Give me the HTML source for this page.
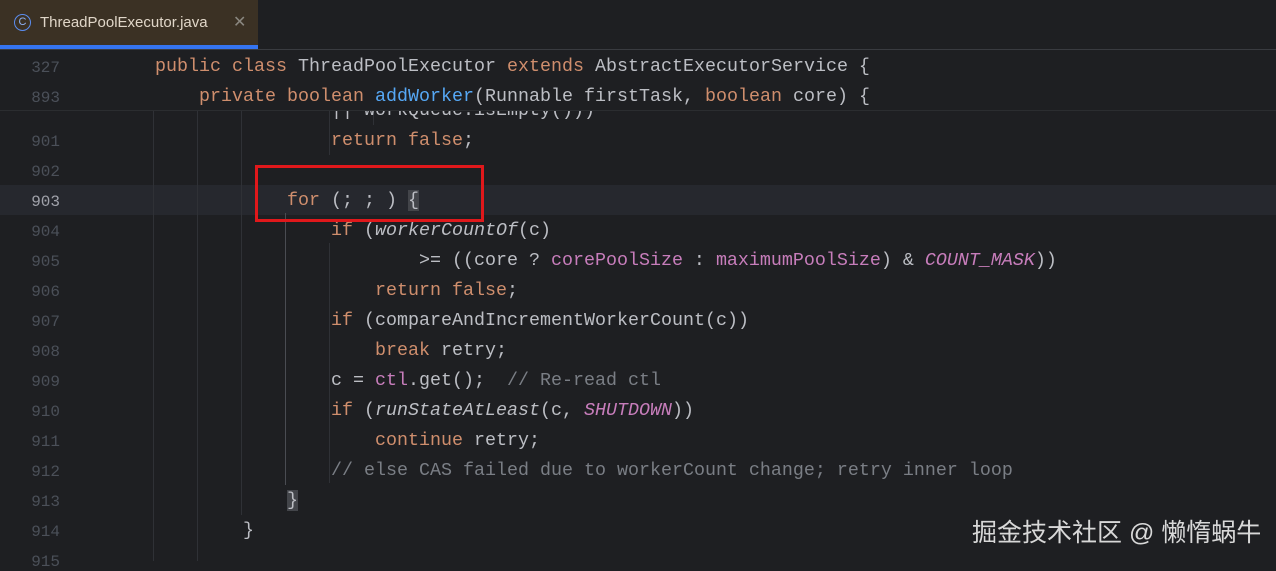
<!DOCTYPE html>
<html><head><meta charset="utf-8"><style>
body{margin:0;width:1276px;height:561px;background:#1e1f22;overflow:hidden;position:relative;font-family:"Liberation Mono",monospace;}
.tabbar{position:absolute;left:0;top:0;width:1276px;height:49px;background:#1e1f22;border-bottom:1px solid #393b40;}
.tab{position:absolute;left:0;top:0;width:258px;height:45px;background:#3b3124;}
.tabline{position:absolute;left:0;top:45px;width:258px;height:4px;background:#3574f0;}
.tab .ic{position:absolute;left:14px;top:14px;width:15px;height:15px;border:1.5px solid #5b8def;border-radius:50%;color:#8fb3f7;font:11px "Liberation Sans",sans-serif;text-align:center;line-height:15px;}
.tab .t{position:absolute;left:40px;top:14px;color:#e0d6c8;font:15px "Liberation Sans",sans-serif;}
.tab .x{position:absolute;left:233px;top:12px;color:#8a8780;font:16px "Liberation Sans",sans-serif;}
.ln{position:absolute;left:0;width:60px;text-align:right;color:#4b5059;font-size:16px;margin-top:2px}
.c{position:absolute;left:155px;white-space:pre;color:#bcbec4;font-size:18.33px;margin-top:2px}
.k{color:#cf8e6d}.m{color:#56a8f5}.p{color:#c77dbb}.i{font-style:italic}.cm{color:#7a7e85}
.g{position:absolute;width:1px;background:#2f3136;}
.hdr{position:absolute;left:0;top:50px;width:1276px;height:60px;background:#1e1f22;border-bottom:1px solid #2b2d30;}
.cur{position:absolute;left:0;top:185px;width:1276px;height:30px;background:#26282e;}
.box{position:absolute;left:255px;top:165px;width:223px;height:51px;border:3px solid #e0181b;}
.wm{position:absolute;left:972px;top:513px;color:#d8d8d8;font:25px "Liberation Sans","Noto Sans CJK SC",sans-serif;}
</style></head><body>
<div class="cur"></div>
<div class="g" style="left:153px;top:110px;height:451px"></div>
<div class="g" style="left:197px;top:110px;height:451px"></div>
<div class="g" style="left:241px;top:110px;height:405px"></div>
<div class="g" style="left:285px;top:213px;height:272px;background:#4a4c52"></div>
<div class="g" style="left:329px;top:110px;height:45px"></div>
<div class="g" style="left:329px;top:243px;height:60px"></div>
<div class="g" style="left:329px;top:303px;height:180px"></div>
<div class="g" style="left:373px;top:110px;height:15px"></div>

<div class="c" style="top:98px;">                <span>|| workQueue.isEmpty()))</span></div>
<div class="ln" style="top:131px">901</div><div class="c" style="top:128px">                <span class="k">return false</span>;</div>
<div class="ln" style="top:161px">902</div>
<div class="ln" style="top:191px;color:#a1a3ab">903</div><div class="c" style="top:188px">            <span class="k">for</span> (; ; ) <span style="background:#43454a">{</span></div>
<div class="ln" style="top:221px">904</div><div class="c" style="top:218px">                <span class="k">if</span> (<span class="i">workerCountOf</span>(c)</div>
<div class="ln" style="top:251px">905</div><div class="c" style="top:248px">                        &gt;= ((core ? <span class="p">corePoolSize</span> : <span class="p">maximumPoolSize</span>) &amp; <span class="p i">COUNT_MASK</span>))</div>
<div class="ln" style="top:281px">906</div><div class="c" style="top:278px">                    <span class="k">return false</span>;</div>
<div class="ln" style="top:311px">907</div><div class="c" style="top:308px">                <span class="k">if</span> (compareAndIncrementWorkerCount(c))</div>
<div class="ln" style="top:341px">908</div><div class="c" style="top:338px">                    <span class="k">break</span> retry;</div>
<div class="ln" style="top:371px">909</div><div class="c" style="top:368px">                c = <span class="p">ctl</span>.get();  <span class="cm">// Re-read ctl</span></div>
<div class="ln" style="top:401px">910</div><div class="c" style="top:398px">                <span class="k">if</span> (<span class="i">runStateAtLeast</span>(c, <span class="p i">SHUTDOWN</span>))</div>
<div class="ln" style="top:431px">911</div><div class="c" style="top:428px">                    <span class="k">continue</span> retry;</div>
<div class="ln" style="top:461px">912</div><div class="c" style="top:458px">                <span class="cm">// else CAS failed due to workerCount change; retry inner loop</span></div>
<div class="ln" style="top:491px">913</div><div class="c" style="top:488px">            <span style="background:#43454a">}</span></div>
<div class="ln" style="top:521px">914</div><div class="c" style="top:518px">        }</div>
<div class="ln" style="top:551px">915</div>

<div class="hdr">
<div class="ln" style="top:7px">327</div><div class="c" style="top:4px"><span class="k">public class</span> ThreadPoolExecutor <span class="k">extends</span> AbstractExecutorService {</div>
<div class="ln" style="top:37px">893</div><div class="c" style="top:34px">    <span class="k">private boolean</span> <span class="m">addWorker</span>(Runnable firstTask, <span class="k">boolean</span> core) {</div>
</div>

<div class="tabbar"><div class="tab"><div class="ic">C</div><div class="t">ThreadPoolExecutor.java</div><div class="x">✕</div></div><div class="tabline"></div></div>
<div class="box"></div>
<div class="wm">掘金技术社区 @ 懒惰蜗牛</div>
</body></html>
